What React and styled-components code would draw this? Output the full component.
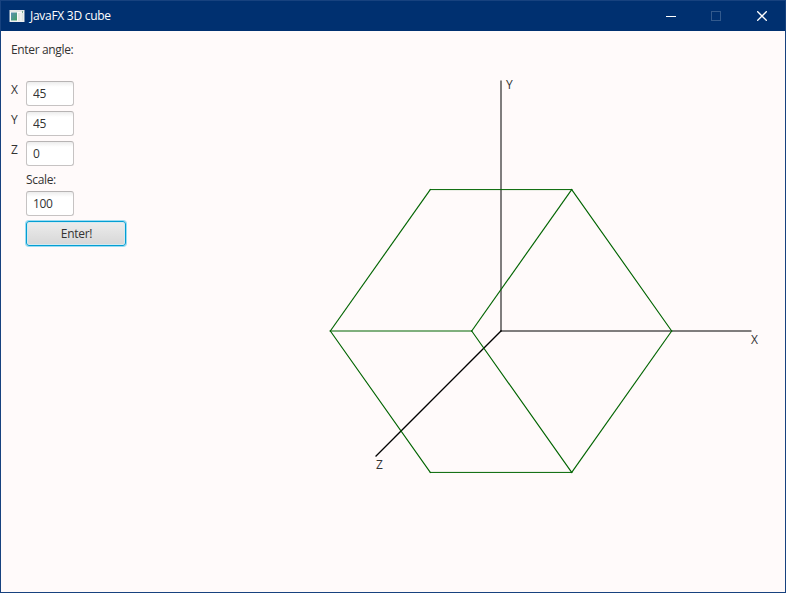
import React, { useState } from "react";
import styled, { createGlobalStyle } from "styled-components";

const GlobalStyle = createGlobalStyle`
  * { box-sizing: border-box; }
  body {
    margin: 0;
    overflow: hidden;
    font-family: "Open Sans", "Noto Sans", sans-serif;
    font-size: 12px;
    color: #333;
  }
`;

const Window = styled.div`
  width: 786px;
  height: 593px;
  display: flex;
  flex-direction: column;
  border: 1px solid #17427f;
  background: #fffafa;
`;

const TitleBar = styled.header`
  height: 30px;
  flex: none;
  display: flex;
  align-items: center;
  padding-left: 8px;
  background: #003070;
  color: #fff;
`;

const Title = styled.span`
  flex: 1;
  margin-left: 5px;
  line-height: 16px;
  letter-spacing: ${(p) => p.$tracking}px;
`;

const CaptionButton = styled.button`
  width: ${(p) => p.$width || 46}px;
  height: 30px;
  display: grid;
  place-items: center;
  padding: 0 1px 0 0;
  border: 0;
  background: none;
  color: ${(p) => (p.disabled ? "#335a8d" : "#fff")};
`;

const Content = styled.main`
  flex: 1;
  display: grid;
  grid-template-columns: 125px 1fr;
  padding-left: 10px;
`;

const Form = styled.form`
  display: flex;
  flex-direction: column;
  padding-top: 11px;
`;

const Caption = styled.label`
  display: block;
  height: 16px;
  line-height: 16px;
  letter-spacing: ${(p) => p.$tracking || 0}px;
`;

const Fields = styled.div`
  display: flex;
  flex-direction: column;
  gap: 5px;
  margin-top: 23px;
`;

const FieldRow = styled.div`
  display: grid;
  grid-template-columns: 15px 48px;
  height: 25px;

  ${Caption} {
    height: 18px;
    line-height: 18px;
  }
`;

const Input = styled.input`
  width: 48px;
  height: 25px;
  padding: 0 6px;
  border: 1px solid #c6c3c3;
  border-top-color: #b7b4b4;
  border-radius: 3px;
  background: linear-gradient(#ededed, #fff 5px);
  font: inherit;
  letter-spacing: -0.3px;
  color: #333;
  outline: none;
`;

const ScaleGroup = styled.div`
  display: flex;
  flex-direction: column;
  align-items: flex-start;
  margin: 6px 0 0 15px;
`;

const ScaleInput = styled(Input)`
  margin-top: 3px;
`;

const SubmitButton = styled.button`
  width: 100px;
  height: 25px;
  margin-top: 5px;
  padding: 0 0 0 1px;
  border: 1px solid #039ed3;
  border-radius: 3px;
  background: linear-gradient(#ececec, #d7d7d7);
  box-shadow: 0 0 0 1px #9bdcf2, inset 0 0 0 1px #d4e9f0;
  font: inherit;
  letter-spacing: -0.3px;
  color: #333;
`;

const Plot = styled.svg`
  display: block;
  width: 649px;
  height: 561px;
  font-family: "Open Sans", "Noto Sans", sans-serif;
  font-size: 12px;
`;

const AxisLine = styled.line`
  stroke: #000;
  stroke-width: ${(p) => (p.$slanted ? 1.25 : 1)};
  stroke-linecap: square;
`;

const EdgeLine = styled.line`
  stroke: #006400;
  stroke-width: ${(p) => (p.$slanted ? 1.15 : 1)};
  stroke-linecap: square;
`;

const AxisName = styled.text`
  fill: #333;
`;

/* Corners of the cube in scene coordinates. */
const P = {
  topLeft: [430.3, 189.58],
  topRight: [571.7, 189.58],
  right: [671.7, 331],
  bottomRight: [571.7, 472.42],
  bottomLeft: [430.3, 472.42],
  left: [330.3, 331],
  inner: [471.7, 331],
};

const edges = [
  ["topLeft", "topRight"],
  ["topRight", "right"],
  ["right", "bottomRight"],
  ["bottomRight", "bottomLeft"],
  ["bottomLeft", "left"],
  ["left", "topLeft"],
  ["left", "inner"],
  ["inner", "topRight"],
  ["inner", "bottomRight"],
];

const axes = [
  { name: "X", end: [751, 331], label: [751, 344] },
  { name: "Y", end: [501, 81], label: [506, 89] },
  { name: "Z", end: [376, 456], label: [376, 469] },
];

function AppIcon() {
  return (
    <svg width="16" height="13" viewBox="0 0 16 13">
      <defs>
        <linearGradient id="screen" x1="0" y1="0" x2="1" y2="1">
          <stop offset="0" stopColor="#5b8fb4" />
          <stop offset="1" stopColor="#3f9f62" />
        </linearGradient>
      </defs>
      <rect x="0.5" width="15" height="12" fill="#e4e7e6" />
      <rect x="1" y="2" width="14" height="9.5" fill="#f9faf9" />
      <rect x="2" y="2.5" width="6" height="8" fill="url(#screen)" />
      <rect x="9" y="3" width="2.5" height="8" fill="#e3e7e5" />
      <rect x="12.5" y="3" width="2" height="8" fill="#dfe4e2" />
      <rect x="13" y="1" width="1" height="2" fill="#7fae91" />
    </svg>
  );
}

export default function App() {
  const [values, setValues] = useState({ X: "45", Y: "45", Z: "0", scale: "100" });
  const update = (key) => (e) => setValues({ ...values, [key]: e.target.value });

  return (
    <>
      <GlobalStyle />
      <Window>
        <TitleBar>
          <AppIcon />
          <Title $tracking={-0.28}>JavaFX 3D cube</Title>
          <CaptionButton aria-label="Minimize" $width={44}>
            <svg width="10" height="10" shapeRendering="crispEdges">
              <rect y="5" width="10" height="1" fill="currentColor" />
            </svg>
          </CaptionButton>
          <CaptionButton aria-label="Maximize" disabled>
            <svg width="10" height="10">
              <rect x="0.5" y="0.5" width="9" height="9" fill="none" stroke="currentColor" />
            </svg>
          </CaptionButton>
          <CaptionButton aria-label="Close">
            <svg width="10" height="10">
              <path d="M0.2 0.2 9.8 9.8M9.8 0.2 0.2 9.8" fill="none" stroke="currentColor" strokeWidth="1.3" />
            </svg>
          </CaptionButton>
        </TitleBar>
        <Content>
          <Form onSubmit={(e) => e.preventDefault()}>
            <Caption $tracking={-0.35}>Enter angle:</Caption>
            <Fields>
              {["X", "Y", "Z"].map((axis) => (
                <FieldRow key={axis}>
                  <Caption htmlFor={axis}>{axis}</Caption>
                  <Input id={axis} value={values[axis]} onChange={update(axis)} />
                </FieldRow>
              ))}
            </Fields>
            <ScaleGroup>
              <Caption htmlFor="scale" $tracking={-0.35}>Scale:</Caption>
              <ScaleInput id="scale" value={values.scale} onChange={update("scale")} />
              <SubmitButton type="submit">Enter!</SubmitButton>
            </ScaleGroup>
          </Form>
          <Plot viewBox="136 31 649 561">
            {axes.map(({ name, end }) => (
              <AxisLine
                key={name}
                $slanted={end[0] !== 501 && end[1] !== 331}
                x1="501"
                y1="331"
                x2={end[0]}
                y2={end[1]}
              />
            ))}
            {edges.map(([a, b]) => (
              <EdgeLine
                key={a + b}
                $slanted={P[a][1] !== P[b][1]}
                x1={P[a][0]}
                y1={P[a][1]}
                x2={P[b][0]}
                y2={P[b][1]}
              />
            ))}
            {axes.map(({ name, label }) => (
              <AxisName key={name} x={label[0]} y={label[1]}>{name}</AxisName>
            ))}
          </Plot>
        </Content>
      </Window>
    </>
  );
}
